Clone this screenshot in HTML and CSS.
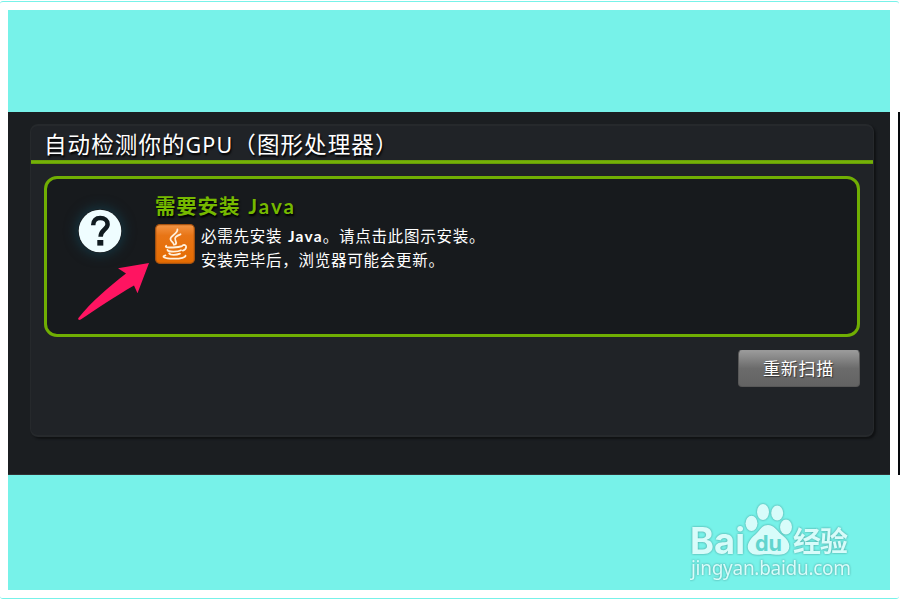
FILE: index.html
```html
<!DOCTYPE html>
<html lang="zh-CN">
<head>
<meta charset="utf-8">
<title>自动检测你的GPU</title>
<link rel="stylesheet" href="styles.css">
</head>
<body>
<div class="frame">
  <main class="canvas">
    <section class="stage">
      <div class="panel">
        <h1 class="title">自动检测你的<span class="gpu">GPU</span>（图形处理器）</h1>
        <div class="notice">
          <svg class="question" viewBox="0 0 44 44"><circle cx="22" cy="22" r="21.3" fill="#effdff"/><path d="M15.2 16.2C15.2 11.5 18 9.1 22.2 9.1C26.7 9.1 29.6 11.5 29.6 15.3C29.6 20.6 22.6 20.7 22.6 27.7" fill="none" stroke="#101b20" stroke-width="4.5"/><rect x="19.3" y="31" width="6" height="5.6" fill="#101b20"/></svg>
          <div class="message">
            <h2 class="heading">需要安装 <span class="java-lg">Java</span></h2>
            <div class="row">
              <svg class="java" viewBox="0 0 40 40"><defs><linearGradient id="o" x2="0" y2="1"><stop stop-color="#f39545"/><stop offset=".28" stop-color="#e87516"/><stop offset="1" stop-color="#e56b00"/></linearGradient></defs><rect x=".7" y=".7" width="38.6" height="38.6" rx="4" fill="url(#o)" stroke="#a85310" stroke-width="1.2"/><g fill="none" stroke="#fff0dc" stroke-width="1.8" stroke-linecap="round"><path d="M22.4 5.4C23 10 15.2 11.2 15.5 15.2C15.7 17.4 18.5 18.4 19 20.8M25.5 10.3C21.5 11.8 18.8 13.6 20.4 16.4C21.3 18 21.8 18.8 20.6 20.4"/><path d="M11.2 21.8C9.5 23.4 14 23.6 18 23.5C22 23.4 25 23 27 22.2M12.5 26C12.8 28 23 28 26 26.2M14.2 29.4C15 31.3 21.5 31.2 25 29.6M28 21.2C32.4 20 32 25.4 27.8 26.6"/><path d="M10.4 31.4C5.8 32.7 9.6 34.6 18 34.7C26.4 34.8 30.8 33.2 30.5 31.6"/></g></svg>
              <p class="copy">必需先安装 <span class="java-sm">Java</span>。请点击此图示安装。<br>安装完毕后，浏览器可能会更新。</p>
            </div>
          </div>
          <svg class="arrow" viewBox="0 0 74 60"><path d="M72 1L41 6.3L49 11.5C32 25 15 39 1.2 56.2Q.8 58.6 3.7 57.6C20 47 37 35 57 23.6L60.5 31.2Z" fill="#ff1461"/></svg>
        </div>
        <button class="scan">重新扫描</button>
      </div>
    </section>
    <svg class="watermark" viewBox="0 0 170 80">
      <g class="mark">
        <text x="0" y="52" class="bai" textLength="55" lengthAdjust="spacingAndGlyphs">Bai</text>
        <ellipse cx="61.5" cy="21.3" rx="6" ry="7.6"/><ellipse cx="73" cy="10" rx="6" ry="8"/><ellipse cx="87.2" cy="11" rx="6" ry="7.6"/><ellipse cx="96" cy="25" rx="6" ry="7.4"/>
        <path d="M78 23C84 23 87 29 92 33C99 38 101 44 98 49C94 55 84 52 78 52C70 52 63 55 59 49C55 43 61 36 66 32C70 28 72 23 78 23Z"/>
        <text x="103" y="50" class="jing" textLength="55">经验</text>
      </g>
      <text x="65" y="48.5" class="du" textLength="27" lengthAdjust="spacingAndGlyphs">du</text>
      <text x="1" y="72.5" class="url" textLength="160">jingyan.baidu.com</text>
    </svg>
  </main>
  <div class="edge"></div>
</div>
</body>
</html>
```

FILE: styles.css
```css
* { box-sizing: border-box; }
body {
  margin: 0;
  padding-top: 1px;
  height: 600px;
  overflow: hidden;
  background: #fff;
  font-family: "Noto Sans", "Noto Sans CJK SC", sans-serif;
}
.frame {
  position: relative;
  height: 598px;
  margin: 0 1px 0 0;
  padding: 8px 9px 7px 8px;
  border-top: 1px solid #77f2e9;
  border-bottom: 1px solid #77f2e9;
  border-radius: 3px;
}
.canvas {
  position: relative;
  width: 882px;
  height: 580px;
  padding-top: 102px;
  background: #77f2e9;
}
.stage {
  height: 363px;
  padding: 12px 16px 0 22px;
  background: #1b1e21;
  border-bottom: 1px solid #303335;
}
.panel {
  width: 844px;
  height: 313px;
  border: 2px solid #26292c;
  border-left-width: 1px;
  border-right-width: 1px;
  border-radius: 8px;
  background: #202327;
  box-shadow: 2px 2px 2px #101214;
  display: flex;
  flex-direction: column;
}
.title {
  flex: none;
  margin: 0;
  height: 38px;
  padding: 1px 0 0 13px;
  background: linear-gradient(#619707, #7cba08 50%, #5c9007) 0 100% / 100% 4px no-repeat;
  color: #fff;
  font-size: 22.5px;
  font-weight: 400;
  line-height: 35px;
  letter-spacing: 1.1px;
  white-space: nowrap;
  text-shadow: 1px 2px 2px #000;
}
.gpu { font-size: 21.5px; }
.notice {
  position: relative;
  flex: none;
  display: flex;
  width: 816px;
  height: 161px;
  margin: 12px 0 0 13px;
  border: 3px solid #70ae03;
  border-radius: 13px;
  background: #171a1d;
}
.question {
  flex: none;
  width: 44px;
  height: 44px;
  margin: 30px 0 0 31px;
  border-radius: 50%;
  box-shadow: 0 0 12px 2px #153540;
}
.message { margin: 10px 0 0 33px; }
.heading {
  margin: 0;
  height: 35px;
  color: #76b900;
  font-size: 20.5px;
  font-weight: 700;
  line-height: 35px;
  letter-spacing: .8px;
  white-space: nowrap;
  text-shadow: 1px 2px 2px #000;
}
.java-lg { font-family: Lato, sans-serif; margin-left: 2px; letter-spacing: 2px; }
.row { display: flex; gap: 6px; }
.java { width: 40px; height: 40px; }
.copy {
  margin: 0;
  color: #fff;
  font-size: 15.5px;
  line-height: 24px;
  letter-spacing: .75px;
  white-space: nowrap;
}
.java-sm { font-family: Lato, sans-serif; font-weight: 700; margin-left: 1px; letter-spacing: 1.2px; }
.arrow {
  position: absolute;
  left: 30px;
  top: 83px;
  width: 74px;
  height: 60px;
}
.scan {
  align-self: flex-end;
  width: 122px;
  height: 37px;
  margin: 13px 13px 0 0;
  padding: 0 1px 2px 0;
  border: 1px solid #585858;
  border-top-color: #999;
  border-radius: 4px;
  background: linear-gradient(#9a9a9a, #6b6b6b 50%, #636363);
  color: #fff;
  font: 17px "Noto Sans CJK SC", sans-serif;
  letter-spacing: .7px;
  text-shadow: 1px 1px 1px #333;
}
.watermark {
  position: absolute;
  left: 682px;
  top: 492px;
  width: 170px;
  height: 80px;
}
.mark, .url { fill: #d8fcfa; filter: drop-shadow(0 0 .8px #459b96); }
.bai { font: 700 37px Inter, sans-serif; }
.du { font: 700 22px Inter, sans-serif; fill: #62d5ce; }
.jing { font: 700 28px "Noto Sans CJK SC", sans-serif; }
.url { font: 19px "Noto Sans", sans-serif; }
.edge {
  position: absolute;
  right: -1px;
  top: 110px;
  width: 2px;
  height: 363px;
  background: #05080c;
}
```
